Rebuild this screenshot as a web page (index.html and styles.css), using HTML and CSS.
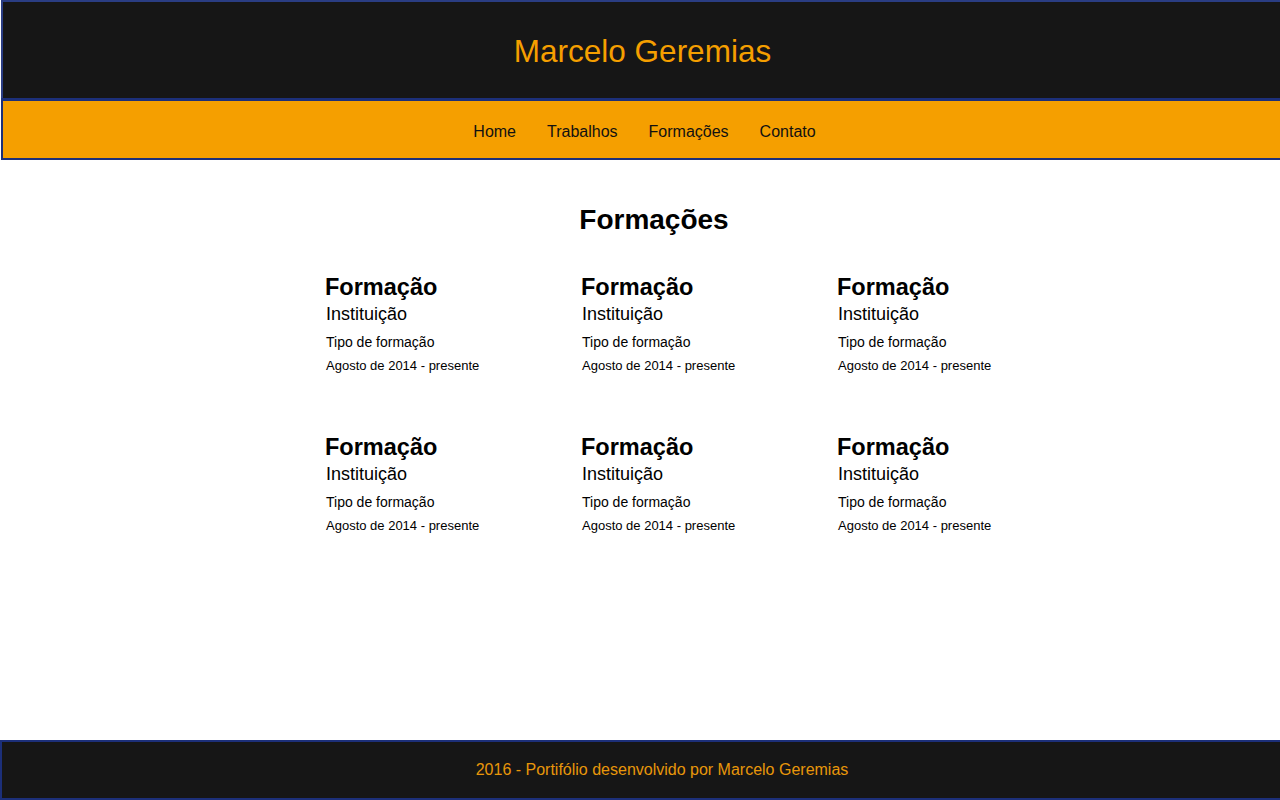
FILE: index.html
```html
<!DOCTYPE html>
<html lang="pt-BR">
<head>
<meta charset="utf-8">
<title>Marcelo Geremias - Formações</title>
<link rel="stylesheet" href="styles.css">
</head>
<body>
<div class="top">
  <header class="masthead">
    <h1 class="brand">Marcelo Geremias</h1>
  </header>
  <nav class="menu">
    <a href="#">Home</a>
    <a href="#">Trabalhos</a>
    <a href="#">Formações</a>
    <a href="#">Contato</a>
  </nav>
</div>
<main class="content">
  <h2 class="section-title">Formações</h2>
  <div class="grid">
    <div class="card">
      <h3 class="card-title">Formação</h3>
      <p class="card-inst">Instituição</p>
      <p class="card-type">Tipo de formação</p>
      <p class="card-date">Agosto de 2014 - presente</p>
    </div>
    <div class="card">
      <h3 class="card-title">Formação</h3>
      <p class="card-inst">Instituição</p>
      <p class="card-type">Tipo de formação</p>
      <p class="card-date">Agosto de 2014 - presente</p>
    </div>
    <div class="card">
      <h3 class="card-title">Formação</h3>
      <p class="card-inst">Instituição</p>
      <p class="card-type">Tipo de formação</p>
      <p class="card-date">Agosto de 2014 - presente</p>
    </div>
    <div class="card">
      <h3 class="card-title">Formação</h3>
      <p class="card-inst">Instituição</p>
      <p class="card-type">Tipo de formação</p>
      <p class="card-date">Agosto de 2014 - presente</p>
    </div>
    <div class="card">
      <h3 class="card-title">Formação</h3>
      <p class="card-inst">Instituição</p>
      <p class="card-type">Tipo de formação</p>
      <p class="card-date">Agosto de 2014 - presente</p>
    </div>
    <div class="card">
      <h3 class="card-title">Formação</h3>
      <p class="card-inst">Instituição</p>
      <p class="card-type">Tipo de formação</p>
      <p class="card-date">Agosto de 2014 - presente</p>
    </div>
  </div>
</main>
<footer class="site-footer">2016 - Portifólio desenvolvido por Marcelo Geremias</footer>
</body>
</html>
```

FILE: styles.css
```css
html, body {
  margin: 0;
  padding: 0;
  overflow: hidden;
}

body {
  font-family: "Liberation Sans", Arial, sans-serif;
  background: #ffffff;
  color: #000000;
  min-height: 800px;
  display: flex;
  flex-direction: column;
}

.top {
  margin-left: 1px;
}

.masthead {
  width: 100%;
  background: #161616;
  border-top: 2px solid #2a3d83;
  border-left: 2px solid #2a3d83;
  height: 94px;
  padding-top: 2px;
  text-align: center;
}

.brand {
  margin: 0;
  font-size: 31.5px;
  font-weight: normal;
  line-height: 94px;
  color: #f59f00;
}

.menu {
  width: 100%;
  background: #f59f00;
  border-top: 3px solid #1c2f79;
  border-bottom: 2px solid #1c2f79;
  border-left: 2px solid #1c2f79;
  height: 53px;
  padding-top: 4px;
  padding-left: 2px;
  display: flex;
  justify-content: center;
  gap: 31px;
}

.menu a {
  font-size: 16px;
  line-height: 53px;
  color: #111111;
  text-decoration: none;
}

.content {
  flex: 1;
  width: 660px;
  margin-left: 324px;
}

.section-title {
  margin: 44px 0 37px;
  font-size: 28px;
  line-height: 32px;
  font-weight: bold;
  text-align: center;
}

.grid {
  display: grid;
  grid-template-columns: repeat(3, 256px);
  row-gap: 58px;
}

.card-title {
  margin: 0;
  padding-left: 1px;
  font-size: 23.5px;
  line-height: 28px;
  font-weight: bold;
  white-space: nowrap;
}

.card-inst {
  margin: 2px 0 0;
  padding-left: 2px;
  font-size: 18px;
  line-height: 22px;
}

.card-type {
  margin: 7px 0 0;
  padding-left: 2px;
  font-size: 14px;
  line-height: 20px;
}

.card-date {
  margin: 5px 0 0;
  padding-left: 2px;
  font-size: 13px;
  line-height: 18px;
  white-space: nowrap;
}

.site-footer {
  width: 100%;
  background: #161616;
  border: 2px solid #1c2f79;
  border-right: none;
  height: 56px;
  padding: 0 20px;
  line-height: 56px;
  text-align: center;
  font-size: 16px;
  color: #e8960a;
}
```
